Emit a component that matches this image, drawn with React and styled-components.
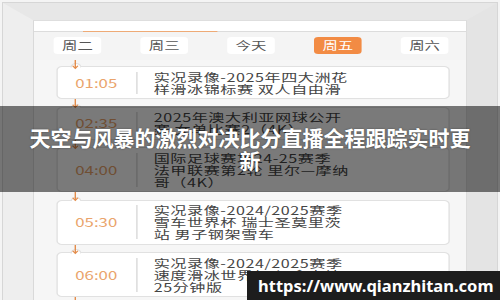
import React from 'react';
import styled, { createGlobalStyle } from 'styled-components';

const GlobalStyle = createGlobalStyle`
  html, body {
    margin: 0;
    padding: 0;
    overflow: hidden;
    background: #f3f3f3;
  }
`;

const Frame = styled.div`
  position: relative;
  width: 500px;
  height: 300px;
  box-sizing: border-box;
  padding: 3px 3px 0;
  overflow: hidden;
  background: #f4f4f4;
  font-family: "Noto Sans CJK SC", "Noto Sans", sans-serif;
`;

// the three walls of the "room" meet the back wall on diagonals
const Room = styled.div`
  height: 320px;
  border-top: 17px solid #e7e7e7;
  border-left: 30px solid #eeeeee;
  border-right: 30px solid #e4e4e4;
  box-shadow: 0 0 0 1px #d6d6d6;
`;

const Wall = styled.div`
  height: 100%;
  box-sizing: border-box;
  overflow: hidden;
  background: #f6f6f6;
  border-left: 1px solid #d9d9d9;
  border-right: 1px solid #dcdcdc;
  border-top: 1px solid #dedede;
`;

// the phone screen is stretched sideways in the photo
const Screen = styled.div`
  width: 310px;
  transform: scaleX(1.4);
  transform-origin: 0 0;
`;

const TopStrip = styled.div`
  height: 10px;
  background: #fff;
`;

const Rule = styled.div`
  display: flex;
  height: 1px;
  background: #dcdcdc;
`;

const Indicator = styled.div`
  margin-left: 35px;
  width: 96px;
  background: #eeaa76;
`;

const TabRow = styled.div`
  display: grid;
  grid-template-columns: repeat(5, 1fr);
  padding: 5px 0 6px;
  background: #f4f4f4;
`;

const Tab = styled.div`
  justify-self: center;
  width: 34px;
  height: 17px;
  border-radius: 3px;
  background: ${p => (p.$active ? '#f28b44' : '#fff')};
  color: ${p => (p.$active ? '#fff' : '#555')};
  font-size: 11px;
  line-height: 17px;
  text-align: center;
`;

const List = styled.div`
  display: flex;
  flex-direction: column;
  padding: 0 13.5px 0 15.5px;
`;

const Connector = styled.div`
  position: relative;
  height: ${p => p.$h}px;
  padding-left: 11px;
  overflow: visible;

  svg {
    position: relative;
    z-index: 2;
    display: block;
  }
`;

const Card = styled.div`
  position: relative;
  display: flex;
  align-items: center;
  padding: 3.5px 0;
  background: #fff;
  border: 1px solid #e1e1e1;
  border-radius: 4px;

  &::before {
    content: '';
    position: absolute;
    z-index: 1;
    top: -4px;
    left: 9px;
    width: 8px;
    height: 8px;
    box-sizing: border-box;
    border: 1px solid #e1e1e1;
    border-radius: 50%;
    background: #fff;
    clip-path: inset(0 0 45% 0);
  }
`;

const Time = styled.div`
  flex: none;
  width: 56px;
  text-align: center;
  color: #eaa46c;
  font-size: 12px;
  line-height: 14px;
`;

const Divider = styled.div`
  flex: none;
  align-self: stretch;
  width: 1px;
  margin: 1px 0;
  background: #d9d9d9;
`;

const Desc = styled.div`
  margin-left: 12px;
  color: #444;
  font-size: 11.5px;
  line-height: 12px;
  letter-spacing: 0.4px;
  white-space: nowrap;
`;

const Line = styled.div``;

const Overlay = styled.div`
  position: absolute;
  left: 0;
  right: 0;
  top: 106px;
  height: 86px;
  box-sizing: border-box;
  padding: 0 28px;
  display: flex;
  align-items: center;
  justify-content: center;
  background: rgba(0, 0, 0, 0.52);
`;

const Title = styled.h1`
  margin: 0;
  color: #fff;
  font-family: "Noto Sans CJK SC", sans-serif;
  font-size: 21px;
  font-weight: 700;
  line-height: 23px;
  text-align: center;
  text-shadow: 0 0 2px rgba(0, 0, 0, 0.4);
`;

const UrlBadge = styled.div`
  position: absolute;
  left: 247px;
  right: 0;
  bottom: 0;
  height: 29px;
  box-sizing: border-box;
  padding-left: 11px;
  display: flex;
  align-items: center;
  background: #1d1d1d;
  color: #fff;
  font-family: "Noto Sans", sans-serif;
  font-size: 16.5px;
  font-weight: 700;
`;

const days = ['周二', '周三', '今天', '周五', '周六'];

const items = [
  { time: '01:05', lines: ['实况录像-2025年四大洲花', '样滑冰锦标赛 双人自由滑'] },
  { time: '02:35', lines: ['2025年澳大利亚网球公开', '赛 女单比赛2（4K）'] },
  { time: '04:00', lines: ['国际足球赛场24-25赛季', '法甲联赛第2轮 里尔—摩纳', '哥（4K）'] },
  { time: '05:30', lines: ['实况录像-2024/2025赛季', '雪车世界杯 瑞士圣莫里茨', '站 男子钢架雪车'] },
  { time: '06:00', lines: ['实况录像-2024/2025赛季', '速度滑冰世界杯 加拿大站', '25分钟版'] }
];

const Arrow = () => (
  <svg width="5" height="10" viewBox="0 0 5 10">
    <line x1="2.5" y1="0" x2="2.5" y2="8" stroke="#e38d4c" strokeWidth="1" />
    <path d="M0.6 5.8 L2.5 8.4 L4.4 5.8" fill="none" stroke="#e38d4c" strokeWidth="1" />
  </svg>
);

const App = () => (
  <Frame>
    <GlobalStyle />
    <Room>
      <Wall>
        <Screen>
          <TopStrip />
          <Rule>
            <Indicator />
          </Rule>
          <TabRow>
            {days.map(d => (
              <Tab key={d} $active={d === '周五'}>
                {d}
              </Tab>
            ))}
          </TabRow>
          <List>
            {items.map((item, i) => (
              <React.Fragment key={item.time}>
                <Connector $h={i === 0 ? 6 : 7.5}>
                  <Arrow />
                </Connector>
                <Card>
                  <Time>{item.time}</Time>
                  <Divider />
                  <Desc>
                    {item.lines.map(l => (
                      <Line key={l}>{l}</Line>
                    ))}
                  </Desc>
                </Card>
              </React.Fragment>
            ))}
            <Connector $h={8}>
              <Arrow />
            </Connector>
          </List>
        </Screen>
      </Wall>
    </Room>
    <Overlay>
      <Title>天空与风暴的激烈对决比分直播全程跟踪实时更新</Title>
    </Overlay>
    <UrlBadge>https://www.qianzhitan.com</UrlBadge>
  </Frame>
);

export default App;
